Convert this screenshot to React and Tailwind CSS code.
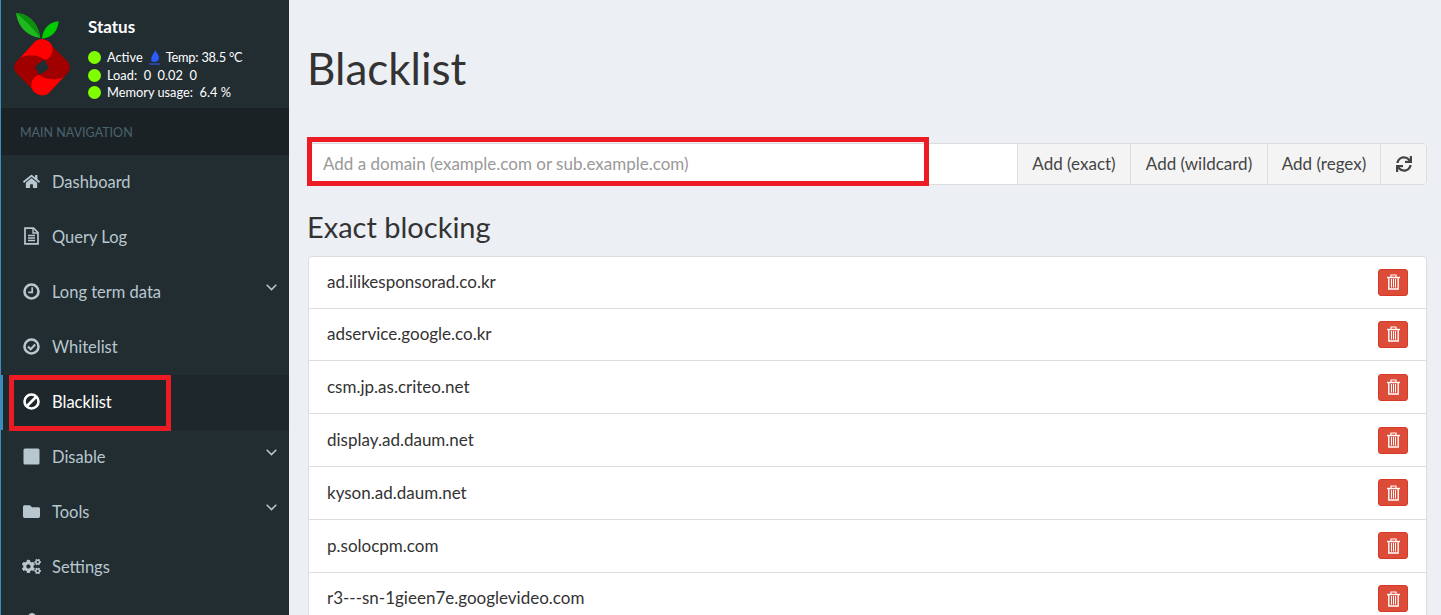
import { FaCogs, FaFolder, FaHome, FaSync, FaUser } from 'react-icons/fa'

const domains = [
  'ad.ilikesponsorad.co.kr',
  'adservice.google.co.kr',
  'csm.jp.as.criteo.net',
  'display.ad.daum.net',
  'kyson.ad.daum.net',
  'p.solocpm.com',
  'r3---sn-1gieen7e.googlevideo.com',
]

function FileIcon() {
  return (
    <svg width="17" height="18" viewBox="0 0 17 18" fill="none" stroke="currentColor">
      <path d="M2 1.2H10.5L15 5.7V16.8H2Z" strokeWidth="1.7" />
      <path d="M10 1.5V6H15" strokeWidth="1.4" />
      <path d="M5 8.5H12M5 11H12M5 13.5H12" strokeWidth="1.4" />
    </svg>
  )
}

function ClockIcon() {
  return (
    <svg width="17" height="17" viewBox="0 0 17 17" fill="none" stroke="currentColor">
      <circle cx="8.5" cy="8.5" r="7" strokeWidth="2.6" />
      <path d="M9.2 4.2V9.4H5.2" strokeWidth="1.7" />
    </svg>
  )
}

function CheckIcon() {
  return (
    <svg width="17" height="17" viewBox="0 0 17 17" fill="none" stroke="currentColor">
      <circle cx="8.5" cy="8.5" r="7" strokeWidth="2.6" />
      <path d="M5 8.5L7.7 11.2L12.2 6.5" strokeWidth="2.2" />
    </svg>
  )
}

function BanIcon() {
  return (
    <svg width="17" height="17" viewBox="0 0 17 17" fill="none" stroke="currentColor">
      <circle cx="8.5" cy="8.5" r="7" strokeWidth="2.6" />
      <path d="M4 13L13 4" strokeWidth="2.6" />
    </svg>
  )
}

function StopIcon() {
  return (
    <svg width="17" height="17" viewBox="0 0 17 17">
      <rect x="0.5" y="0.5" width="16" height="16" rx="1.5" fill="currentColor" />
    </svg>
  )
}

function Chevron() {
  return (
    <svg width="11" height="7" viewBox="0 0 11 7" fill="none" stroke="currentColor" strokeWidth="1.5" className="mb-[9px]">
      <path d="M0.7 0.8L5.5 5.6L10.3 0.8" />
    </svg>
  )
}

function TrashIcon() {
  return (
    <svg width="13" height="16" viewBox="0 0 13 16" fill="none" stroke="white">
      <path d="M0 3.5H13" strokeWidth="1.4" />
      <path d="M4 3V1H9V3" strokeWidth="1.2" />
      <path d="M1.8 4V15H11.2V4" strokeWidth="1.4" />
      <path d="M4.5 5V13.5M6.5 5V13.5M8.5 5V13.5" strokeWidth="1" />
    </svg>
  )
}

const navItems = [
  { label: 'Dashboard', icon: <FaHome size={17} /> },
  { label: 'Query Log', icon: <FileIcon /> },
  { label: 'Long term data', icon: <ClockIcon />, more: true },
  { label: 'Whitelist', icon: <CheckIcon /> },
  { label: 'Blacklist', icon: <BanIcon />, active: true },
  { label: 'Disable', icon: <StopIcon />, more: true },
  { label: 'Tools', icon: <FaFolder size={17} />, more: true },
  { label: 'Settings', icon: <FaCogs size={19} /> },
  { icon: <FaUser size={16} /> },
]

function Logo() {
  return (
    <svg width="70" height="92" viewBox="0 0 210 276" className="shrink-0">
      <path d="M24 15C55 15 90 40 97 90C60 85 30 60 24 15Z" fill="#1fb81f" />
      <path d="M24 15C55 15 90 40 97 90C75 60 50 35 24 15Z" fill="#0c8f0c" />
      <path d="M152 40C150 70 130 90 102 92C105 60 125 42 152 40Z" fill="#00cc00" />
      <rect x="35.3" y="111.3" width="133.4" height="133.4" rx="25" transform="rotate(45 102 178)" fill="#a00000" />
      <path d="M36 150L82 100C95 90 115 92 128 106C139 122 135 146 112 156C92 142 62 136 36 150Z" fill="#ff0000" />
      <path d="M168 206L122 256C109 266 89 264 76 250C65 234 69 210 92 200C112 214 142 220 168 206Z" fill="#ff0000" />
      <path d="M112 156C114 168 120 174 124 178C116 190 100 198 92 200C90 188 84 182 80 178C88 166 104 158 112 156Z" fill="#222d32" />
    </svg>
  )
}

function Dot() {
  return <span className="w-[13px] h-[13px] rounded-full bg-[#7fff00] shrink-0" />
}

function NavItem({ label, icon, more, active }) {
  return (
    <li
      className={
        'h-[55px] flex items-center pb-[1px] pl-[21px] pr-[12px] text-[16.5px] ' +
        (active ? 'bg-[#1e282c] text-white' : 'text-[#b8c7ce]')
      }
    >
      <span className="w-[19px] flex justify-center -mt-[2px]">{icon}</span>
      <span className="ml-[11px] flex-1">{label}</span>
      {more && <Chevron />}
    </li>
  )
}

function DomainRow({ domain }) {
  return (
    <li className="h-[52.85px] first:h-[51.5px] flex items-center justify-between pl-[18px] pr-[18px] border-b border-[#dddddd]">
      <span className="text-[17px] text-[#333333] pb-[1px]">{domain}</span>
      <button type="button" className="w-[30px] h-[27px] rounded-[3px] bg-[#dd4b39] border border-[#d73925] flex items-center justify-center">
        <TrashIcon />
      </button>
    </li>
  )
}

export default function App() {
  return (
    <div className="h-[615px] flex overflow-hidden bg-[#ecf0f5] font-['Lato','Liberation_Sans',sans-serif] relative">
      {/* sidebar */}
      <aside className="w-[289px] shrink-0 bg-[#222d32] border-l border-[#3c8dbc] relative">
        <div className="h-[108px] flex pl-[7px] pt-[8px]">
          <Logo />
          <div className="ml-[10px] text-white">
            <p className="text-[17px] font-bold mt-[9px] leading-[20px]">Status</p>
            <div className="mt-[12px] text-[12.8px] leading-[17.5px]">
              <div className="flex items-center gap-[6px]"><Dot /><span>Active</span>
                <svg width="11" height="15" viewBox="0 0 11 15">
                  <path d="M6.5 0C7 3 10.5 5 10 8.5C9.5 11.5 6 12.5 3 11.5C0.5 8.5 4.5 4 6.5 0Z" fill="#2a5cff" />
                  <rect x="0" y="13.5" width="11" height="1" fill="#2a5cff" />
                </svg>
                <span className="tracking-[-0.2px]">Temp: 38.5 °C</span></div>
              <div className="flex items-center gap-[6px]"><Dot /><span>Load:&nbsp; 0&nbsp; 0.02&nbsp; 0</span></div>
              <div className="flex items-center gap-[6px]"><Dot /><span>Memory usage:&nbsp; 6.4 %</span></div>
            </div>
          </div>
        </div>
        <div className="h-[47px] bg-[#1a2226] flex items-center pl-[19px] pt-[3px] text-[12.5px] text-[#4b646f]">MAIN NAVIGATION</div>
        <ul>
          {navItems.map((item, i) => (
            <NavItem key={i} {...item} />
          ))}
        </ul>
        {/* active marker */}
        <div className="absolute left-[-1px] top-[375px] w-[3px] h-[55px] bg-[#3c8dbc]" />
        {/* annotation */}
        <div className="absolute left-[8px] top-[375px] w-[162px] h-[56px] border-[5px] border-[#ed1c24]" />
      </aside>

      {/* content */}
      <main className="flex-1 pl-[19px] pr-[14px]">
        <h1 className="text-[44px] leading-[46px] text-[#333333] mt-[45px] -ml-px">Blacklist</h1>

        <div className="mt-[52px] h-[42px] flex rounded-[4px] border border-[#dddddd] text-[17px] text-[#444444] overflow-hidden">
          <div className="flex-1 bg-white flex items-center pl-[14px] text-[#999999]">Add a domain (example.com or sub.example.com)</div>
          <button type="button" className="w-[113px] bg-[#f4f4f4] border-l border-[#dddddd]">Add (exact)</button>
          <button type="button" className="w-[137px] bg-[#f4f4f4] border-l border-[#dddddd]">Add (wildcard)</button>
          <button type="button" className="w-[113px] bg-[#f4f4f4] border-l border-[#dddddd]">Add (regex)</button>
          <button type="button" className="w-[46px] bg-[#f4f4f4] border-l border-[#dddddd] flex items-center justify-center"><FaSync size={16} /></button>
        </div>

        <h2 className="text-[29px] leading-[33px] text-[#333333] mt-[25px] -ml-px">Exact blocking</h2>

        <ul className="mt-[13px] bg-white rounded-t-[4px] border border-[#dddddd] border-b-0">
          {domains.map((d) => (
            <DomainRow key={d} domain={d} />
          ))}
        </ul>
      </main>

      {/* annotation */}
      <div className="absolute left-[307px] top-[137px] w-[622px] h-[49px] border-[5px] border-[#ed1c24]" />
    </div>
  )
}
